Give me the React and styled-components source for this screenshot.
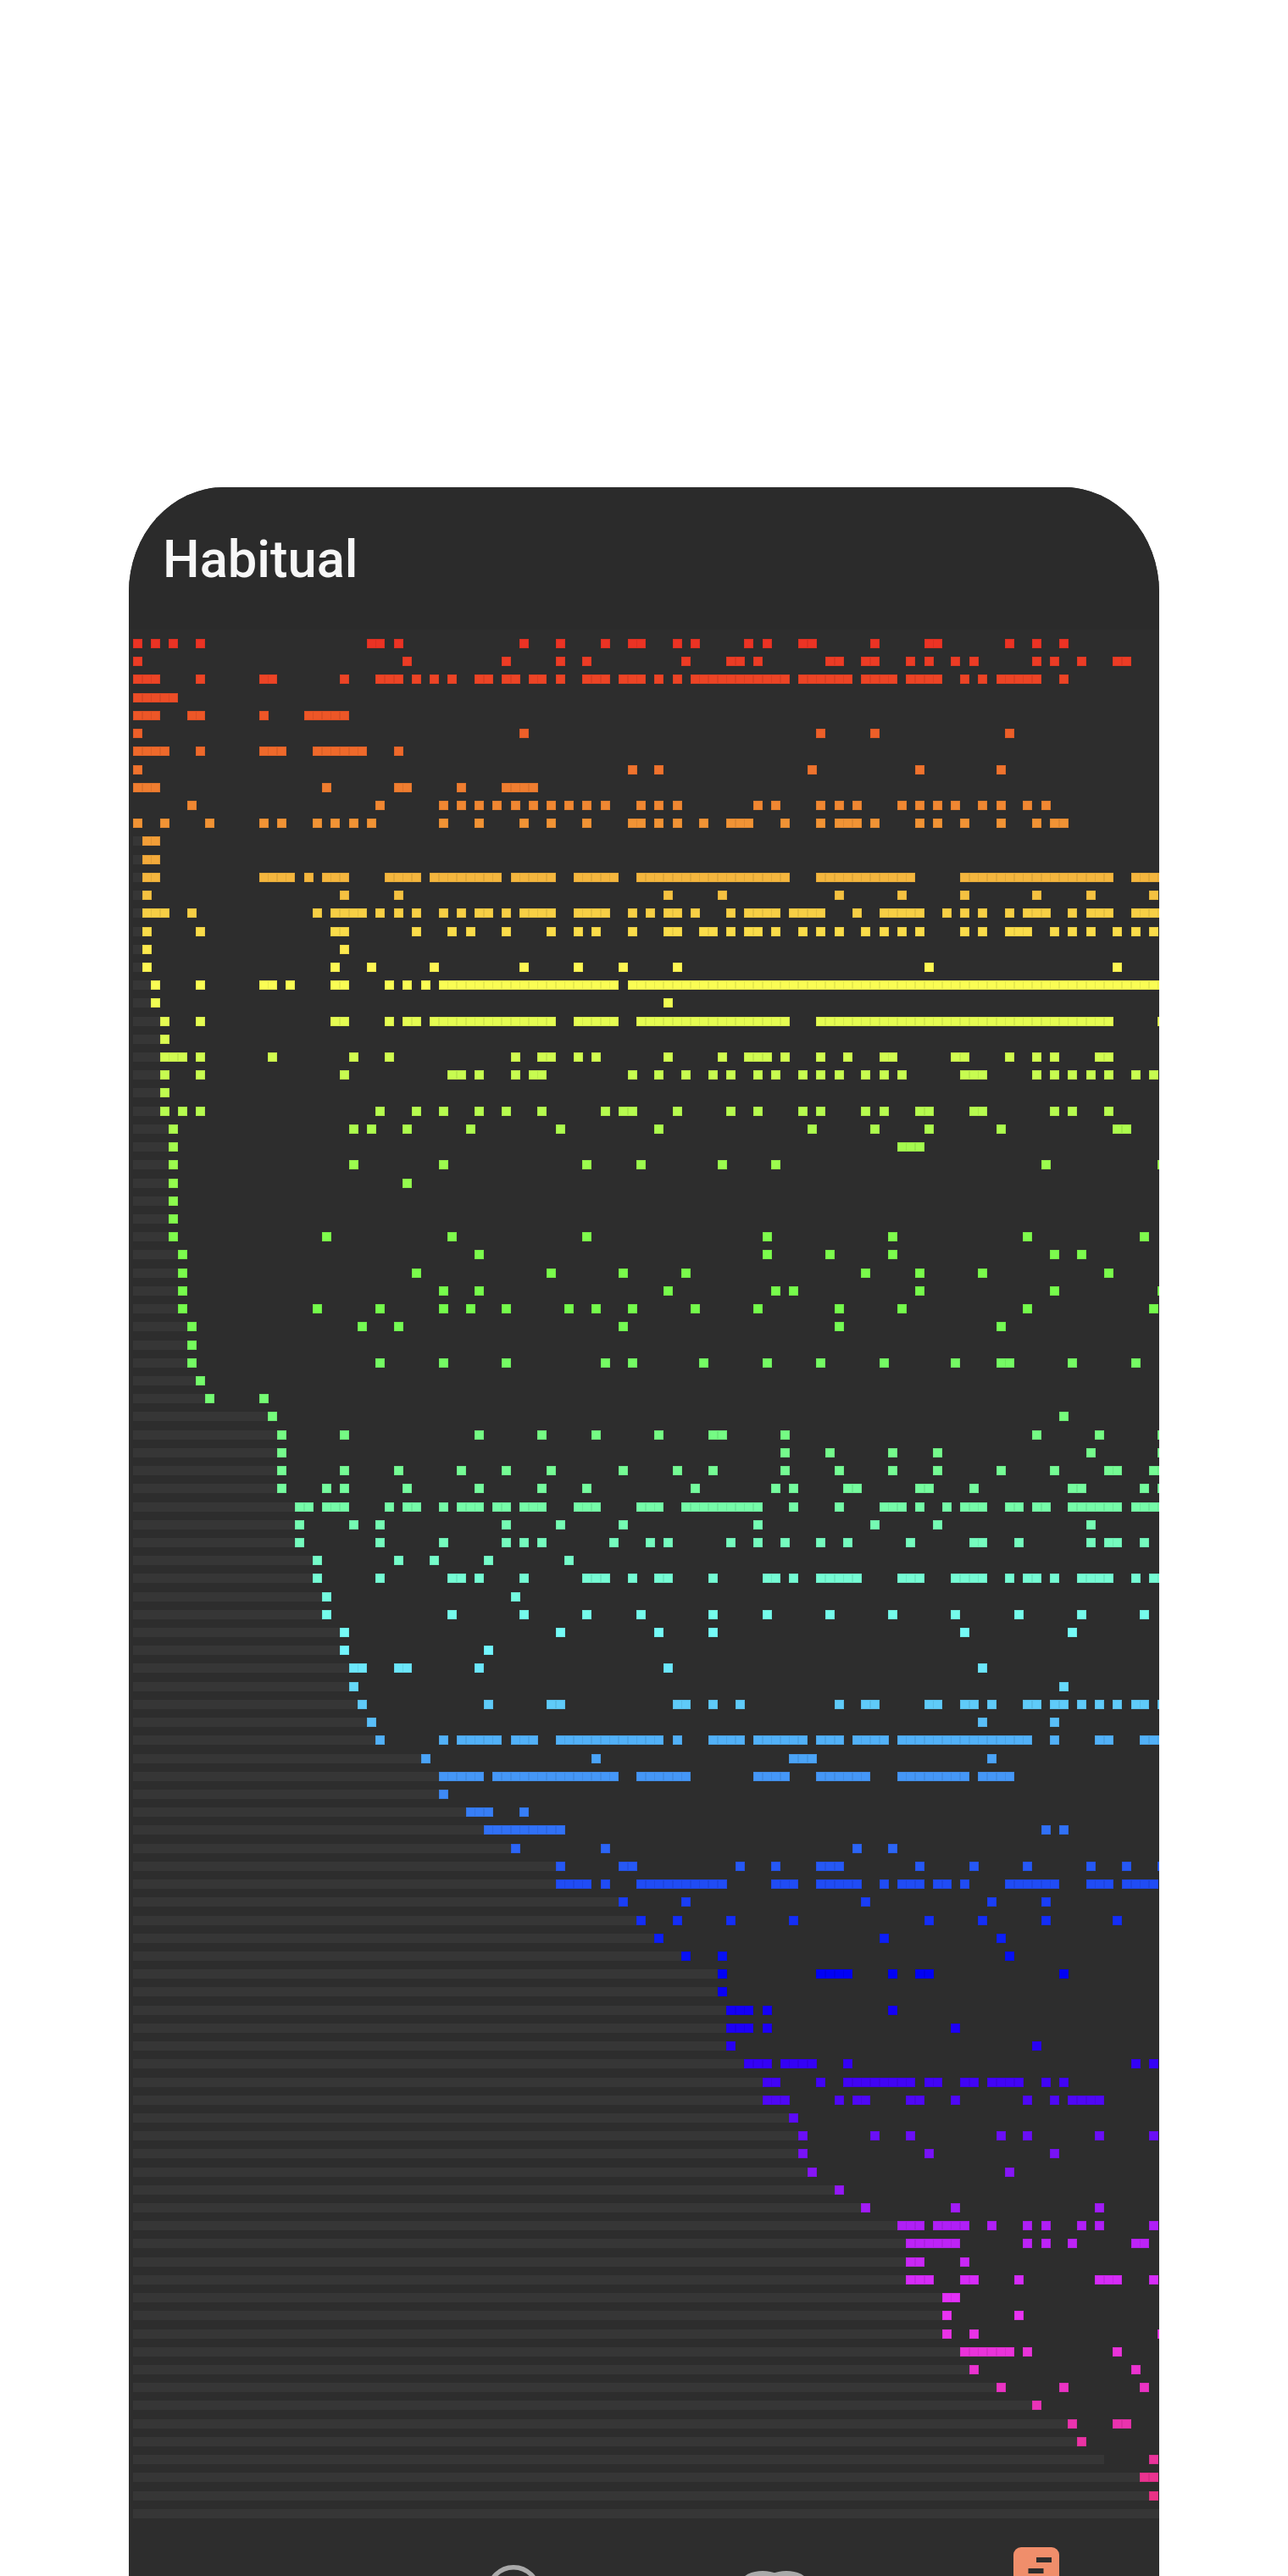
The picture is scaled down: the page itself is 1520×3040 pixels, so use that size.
import React from 'react';
import styled, { createGlobalStyle } from 'styled-components';

const GlobalStyle = createGlobalStyle`
  html, body {
    margin: 0;
    padding: 0;
    height: 3040px;
    overflow: hidden;
    background: #fff;
    font-family: Roboto, "Liberation Sans", sans-serif;
  }
`;

const PITCH = 10.61;
const COLUMNS = 115;

// one string per habit: the day columns that were ticked off, ranges with a dash
const HABITS = [
  '0 2 4 7 26 27 29 43 47 52 55 56 60 62 68 70 74 75 82 88 89 97 100 103',
  '0 30 41 47 50 61 66 67 69 77 78 81 82 86 88 91 93 100 102 105 109 110',
  '0-2 7 14 15 23 27-29 31 33 35 38 39 41 42 44 45 47 50-52 54-56 58 60 62-72 74-79 81-84 86-89 92 94 96-100 103',
  '0-4',
  '0-2 6 7 14 19-23',
  '0 43 76 82 97',
  '0-3 7 14-16 20-25 29',
  '0 55 58 75 87 96',
  '0-2 21 29 30 36 41-44',
  '6 27 34 36 38 40 42 44 46 48 50 52 56 58 60 69 71 76 78 80 85 87 89 91 94 96 99 101',
  '0 3 8 14 16 20 22 24 26 34 38 43 46 50 55 56 58 60 63 66-68 72 76 78-80 82 87 89 92 96 100 102 103',
  '1 2',
  '1 2',
  '1 2 14-17 19 21-23 28-31 33-40 42-46 49-53 56-72 76-86 92-108 111-114',
  '1 23 29 59 65 78 85 92 100 106 113',
  '1-3 6 20 22-25 27 29 31 34 36 38 39 41 43-46 49-52 55 57 59 60 62 66 68-71 73-76 80 83-87 90 92 94 97 99-101 104 106-108 111-114',
  '1 7 22 23 31 35 37 41 46 49 51 55 59 60 63 64 66 68 69 71 74 76 78 81 83 85 87 92 94 97-99 102 104 106 109 111 113',
  '1 23',
  '1 22 26 33 43 49 54 60 88 109',
  '2 7 14 15 17 22 23 28 30 32 34-53 55-114',
  '2 59',
  '3 7 22 23 28 30 31 33-46 49-53 56-72 76-108 114',
  '3',
  '3-5 7 15 24 28 42 45 46 49 51 59 65 68-70 72 76 79 83 84 91 92 97 100 102 107 108',
  '3 7 23 35 36 38 42 44 45 55 58 61 64 66 69 71 74 76 78 81 83 85 92-94 100 102 104 106 108 111 113',
  '3',
  '3 5 7 27 31 34 38 41 45 52 54 55 60 66 69 74 76 81 83 87 88 93 94 102 104 108',
  '4 24 26 30 37 47 58 75 82 88 96 109 110',
  '4 85-87',
  '4 24 34 50 56 65 71 101 114',
  '4 30',
  '4',
  '4',
  '4 21 35 50 70 84 99 112',
  '5 38 70 77 84 102 105',
  '5 31 46 54 61 81 87 94 108',
  '5 34 38 59 71 73 87 102 114',
  '5 20 27 34 37 41 48 51 55 62 69 78 85 99 113',
  '6 25 29 54 78 96',
  '6',
  '6 27 34 41 52 55 63 70 76 83 91 96 97 104 111',
  '7',
  '8 14',
  '15 103',
  '16 23 38 45 51 58 64 65 72 100 107 114',
  '16 72 77 84 89 106 114',
  '16 23 29 36 41 46 54 60 64 72 78 84 89 96 102 108 109 113 114',
  '16 21 23 30 38 45 50 62 71 73 79 80 87 88 93 104 105 112 114',
  '18 19 21-23 28 30 31 34 36-38 40 41 43-45 49-51 56-58 61-69 73 78 83-85 87 90 92-94 97 98 100 101 104-109 111-114',
  '18 24 27 41 47 54 69 82 89 106',
  '18 27 34 41 43 45 53 57 59 66 69 72 76 79 86 93 94 98 106 108 109 112',
  '20 29 33 39 48',
  '20 27 35 36 38 43 50-52 55 58 59 64 70 71 73 76-80 85-87 91-94 97 99 100 102 105-108 111 113 114',
  '21 42',
  '21 35 43 50 56 64 70 77 84 91 98 105 112',
  '23 47 58 64 92 104',
  '23 39',
  '24 25 29 30 38 59 94',
  '24 103',
  '25 39 46 47 60 61 64 67 78 81 82 88 89 92 93 95 99 100 102 103 105 107 109 111 112 114',
  '26 94 102',
  '27 34 36-40 42-44 47-58 60 64-67 69-74 76-78 80-83 85-99 102 107 108 112-114',
  '32 51 73-75 95',
  '34-38 40-53 56-61 69-72 76-81 85-92 94-97',
  '34',
  '37-39 43',
  '39-47 101 103',
  '42 52 80 84',
  '47 54 55 67 71 76-78 87 93 99 106 110 114',
  '47-50 52 56-65 71-73 76-80 83 85-87 89 90 92 97-102 106-108 110-113',
  '54 61 81 95 101',
  '56 60 66 73 88 94 101 109',
  '58 83 96',
  '61 65 97',
  '65 76-79 84 87 88 103',
  '65',
  '66-68 70 84',
  '66-68 70 91',
  '66 100',
  '68-70 72-75 79 111 113',
  '70 71 76 79-86 88 89 92 93 95-98 101 103',
  '70-72 78 80 81 86 87 91 99 102 104-107',
  '73',
  '74 82 86 96 99 107 113',
  '74 88 102',
  '75 97',
  '78',
  '81 91 107',
  '85-87 89-92 95 99 101 105 107 113',
  '86-91 99 101 104 111 112',
  '86 87 92',
  '86-88 92 93 98 107-109 113',
  '90 91',
  '90 98',
  '90 93 114',
  '92-97 99 109',
  '93 111',
  '96 103 112',
  '100',
  '104 109 110',
  '105',
  '113',
  '112 113',
  '113',
  '',
];

// the empty bar stays put where it does not simply run up to the first tick
const TRACK_OVERRIDE = { 101: 108, 104: COLUMNS };

const HUES = [
  [0, '#eb3324'], [15, '#ed5b28'], [30, '#f08a33'], [45, '#f5c040'], [60, '#fffd55'],
  [75, '#cffc50'], [90, '#a6fb4e'], [105, '#80fb4d'], [120, '#75fb4c'], [150, '#75fb96'],
  [165, '#75fbc8'], [180, '#75fbfd'], [195, '#58bbf8'], [210, '#3880f6'], [225, '#1e46f5'],
  [240, '#0000f5'], [255, '#3000f5'], [270, '#6e10f6'], [285, '#b01ff6'], [300, '#ea33f7'],
  [315, '#ea33c0'], [330, '#ea3392'], [345, '#ea3360'], [360, '#eb3324'],
];

const toRgb = (hex) => [1, 3, 5].map((i) => parseInt(hex.slice(i, i + 2), 16));

const habitColor = (index) => {
  const hue = index * 3.24;
  const next = HUES.findIndex(([h]) => h >= hue);
  if (next <= 0) return HUES[0][1];
  const [h0, c0] = HUES[next - 1];
  const [h1, c1] = HUES[next];
  const t = (hue - h0) / (h1 - h0);
  const a = toRgb(c0);
  const b = toRgb(c1);
  return `rgb(${a.map((v, i) => Math.round(v + (b[i] - v) * t)).join(',')})`;
};

const parseDays = (text) =>
  text.split(' ').filter(Boolean).flatMap((part) => {
    const [from, to] = part.split('-').map(Number);
    if (to === undefined) return [from];
    return Array.from({ length: to - from + 1 }, (_, i) => from + i);
  });

const Page = styled.div`
  padding: 575px 0 0 152px;
  height: 3040px;
  box-sizing: border-box;
  overflow: hidden;
`;

const Phone = styled.div`
  width: 1216px;
  background: #2d2d2d;
  border-radius: 112px 112px 0 0 / 124px 124px 0 0;
  overflow: hidden;
`;

const AppBar = styled.header`
  height: 168px;
  box-sizing: border-box;
  background: #2b2b2b;
  display: flex;
  align-items: center;
  padding: 3px 0 0 40px;
`;

const Title = styled.h1`
  margin: 0;
  font-family: Roboto, sans-serif;
  font-weight: 500;
  font-size: 61.5px;
  line-height: 1;
  color: #f7f7f7;
`;

const Board = styled.main`
  padding: 11px 0 0 5px;
  display: flex;
  flex-direction: column;
  gap: 10.22px;
`;

const HabitRow = styled.div`
  --habit: ${(p) => p.$color};
  display: grid;
  grid-template-columns: repeat(${COLUMNS}, ${PITCH}px);
  grid-template-rows: 11px;
`;

const Track = styled.div`
  grid-row: 1;
  grid-column: 1 / span ${(p) => p.$span};
  background: #363636;
`;

const Day = styled.div`
  grid-row: 1;
  grid-column: ${(p) => p.$day + 1};
  width: 11px;
  background: var(--habit);
  box-shadow: inset 0 0 0 1px rgba(0, 0, 0, 0.07);
`;

const BottomNav = styled.nav`
  display: flex;
  justify-content: center;
  height: 140px;
`;

const Tab = styled.div`
  flex: none;
  width: 308.5px;
  display: flex;
  justify-content: center;
  align-items: flex-start;
  padding-top: ${(p) => p.$top}px;
  box-sizing: border-box;
`;

const App = () => (
  <>
    <GlobalStyle />
    <Page>
      <Phone>
        <AppBar>
          <Title>Habitual</Title>
        </AppBar>
        <Board>
          {HABITS.map((days, index) => {
            const ticked = parseDays(days);
            const span = TRACK_OVERRIDE[index] ?? (index <= 10 ? 0 : ticked[0]);
            return (
              <HabitRow key={index} $color={habitColor(index)}>
                {span > 0 && <Track $span={span} />}
                {ticked.map((day) => (
                  <Day key={day} $day={day} />
                ))}
              </HabitRow>
            );
          })}
        </Board>
        <BottomNav>
          <Tab $top={34} />
          <Tab $top={55}>
            <svg width="64" height="64" viewBox="0 0 64 64" fill="none">
              <circle cx="32" cy="32" r="29.3" stroke="#a9a9a9" strokeWidth="5.4" />
            </svg>
          </Tab>
          <Tab $top={62}>
            <svg width="76" height="30" viewBox="0 0 76 30" fill="#a9a9a9">
              <ellipse cx="24" cy="12" rx="24" ry="12" />
              <ellipse cx="52" cy="12" rx="24" ry="12" />
            </svg>
          </Tab>
          <Tab $top={34}>
            <svg width="54" height="70" viewBox="0 0 54 70">
              <rect width="54" height="70" rx="9" fill="#f08e6b" />
              <rect x="27" y="12" width="18" height="6" fill="#2d2d2d" />
              <rect x="17.5" y="25" width="18" height="6" fill="#2d2d2d" />
              <rect x="8" y="38" width="18" height="6" fill="#2d2d2d" />
            </svg>
          </Tab>
        </BottomNav>
      </Phone>
    </Page>
  </>
);

export default App;
